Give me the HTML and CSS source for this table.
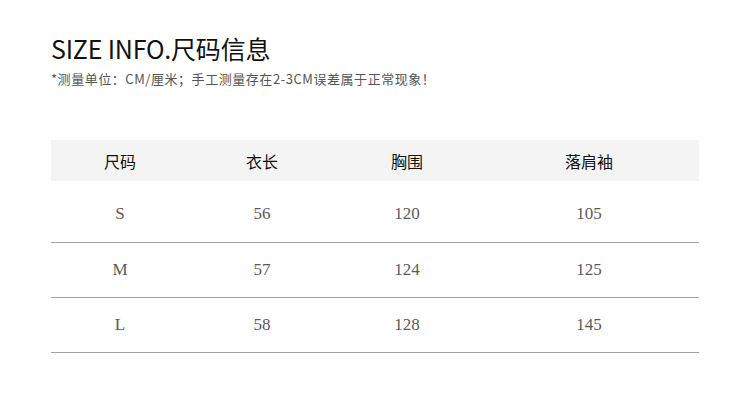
FILE: index.html
```html
<!DOCTYPE html>
<html lang="zh">
<head>
<meta charset="utf-8">
<link rel="stylesheet" href="styles.css">
</head>
<body>
<div class="page">
  <h1 class="title">SIZE INFO.尺码信息</h1>
  <p class="note">*测量单位：CM/厘米；手工测量存在2-3CM误差属于正常现象！</p>
  <div class="table">
    <div class="row head">
      <div class="cell">尺码</div>
      <div class="cell">衣长</div>
      <div class="cell">胸围</div>
      <div class="cell">落肩袖</div>
    </div>
    <div class="row body first">
      <div class="cell">S</div>
      <div class="cell">56</div>
      <div class="cell">120</div>
      <div class="cell">105</div>
    </div>
    <div class="row body">
      <div class="cell">M</div>
      <div class="cell">57</div>
      <div class="cell">124</div>
      <div class="cell">125</div>
    </div>
    <div class="row body">
      <div class="cell">L</div>
      <div class="cell">58</div>
      <div class="cell">128</div>
      <div class="cell">145</div>
    </div>
  </div>
</div>
</body>
</html>
```

FILE: styles.css
```css
html, body {
  margin: 0;
  padding: 0;
  background: #ffffff;
}
.page {
  padding: 34px 51px 0 51px;
  width: 648px;
}
.title {
  margin: 0;
  font-family: "Noto Sans CJK SC", "Noto Sans", sans-serif;
  font-weight: 400;
  font-size: 25px;
  line-height: 28px;
  letter-spacing: -0.2px;
  color: #111111;
}
.note {
  margin: 8px 0 0 0;
  font-family: "Noto Sans CJK SC", "Noto Sans", sans-serif;
  font-size: 13px;
  line-height: 18px;
  letter-spacing: 0.55px;
  color: #555555;
}
.table {
  margin-top: 52px;
}
.row {
  display: grid;
  grid-template-columns: 138px 146px 144px 220px;
  align-items: center;
  text-align: center;
}
.head {
  height: 41px;
  background: #f4f4f4;
  font-family: "Noto Sans CJK SC", sans-serif;
  font-size: 16px;
  font-weight: 400;
  color: #111111;
}
.body {
  height: 54px;
  border-bottom: 1px solid #a3a3a3;
  font-family: "Liberation Serif", serif;
  font-size: 17px;
  color: #5a5a5a;
}
.body.first {
  height: 56px;
  padding-top: 5px;
}
```
